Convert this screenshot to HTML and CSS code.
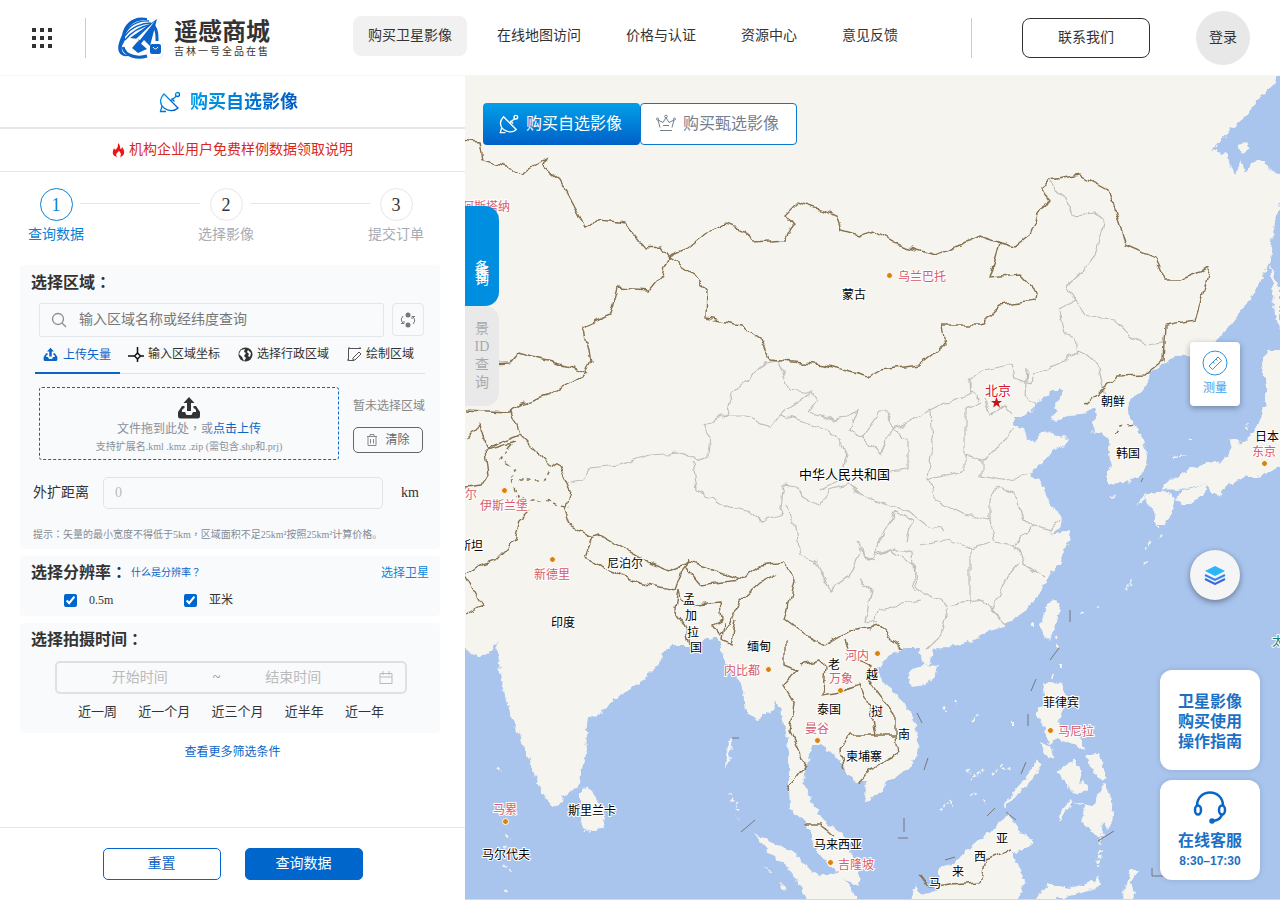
FILE: index.html
```html
<!DOCTYPE html>
<html lang="zh-CN">
<head>
<meta charset="utf-8">
<title>遥感商城</title>
<link rel="stylesheet" href="styles.css">
</head>
<body>
<svg class="defs" width="0" height="0" aria-hidden="true">
  <defs>
    <linearGradient id="brand" x1="0" y1="0" x2="1" y2="1"><stop offset="0" stop-color="#00a0e9"/><stop offset="1" stop-color="#0055c4"/></linearGradient>
    <symbol id="dish" viewBox="0 0 22 22"><path d="M5 3C0 8 1 14 5 17S15 21 19 17Z"/><path d="M3 15 1.500 20.500H7M11.500 10l6-5M12.500 7.500l3 3"/><circle cx="18.500" cy="3.500" r="2"/></symbol>
    <symbol id="upload" viewBox="0 0 24 24"><path d="M12 1 6.500 7H10v8h4V7h3.500Z"/><path d="M7.500 10H5L1 16v4q0 2.500 2.500 2.500h17Q23 22.500 23 20v-4l-4-6h-2.500v2q3 1 2.500 4h-3l-1.500 3h-5L8 16H5q-.5-3 2.500-4Z"/></symbol>
  </defs>
</svg>

<header class="header">
  <button class="apps" aria-label="应用"><svg width="20" height="20" fill="#333"><path d="M0 0h4v4H0zM8 0h4v4H8zM16 0h4v4h-4zM0 8h4v4H0zM8 8h4v4H8zM16 8h4v4h-4zM0 16h4v4H0zM8 16h4v4H8zM16 16h4v4h-4z"/></svg></button>
  <span class="rule"></span>
  <a class="logo" href="#">
    <svg width="46" height="46" viewBox="0 0 46 46">
      <circle cx="38" cy="35" r="10" fill="#f5f5f5"/><circle cx="37" cy="34" r="9" fill="#fff"/>
      <path fill="#0b62c9" d="M29 3C15 0 6 9 4 20 1 27-1 32 1 37c3 6 10 4 13 3C5 41 3 36 4 31l3-6C7 13 16 4 29 5Z"/>
      <g fill="none" stroke="#0b62c9"><path stroke-width="3" d="M5 32c2 9 14 12 24 9M34 9q5 4 5 14v3"/><path stroke-width="1.300" d="M8 17C13 9 22 5 31 6M7 21C13 12 24 8 33 8M7 25C14 16 25 11 35 9"/></g>
      <path fill="#0b62c9" d="M39 4 32 31l-6-6-4 5-2-6-8-1Zm-19 22 9 8-9 4-6-5Z"/><path d="M37 6 18 24l4 1Z" fill="#fff"/>
      <rect x="32" y="29" width="11" height="10" rx="2" fill="#0b62c9"/><path d="M35 32q2.500 4 5 0" fill="none" stroke="#fff"/>
    </svg>
    <span class="logo-text"><strong>遥感商城</strong><small>吉林一号全品在售</small></span>
  </a>
  <nav class="nav"><a class="on" href="#">购买卫星影像</a><a href="#">在线地图访问</a><a href="#">价格与认证</a><a href="#">资源中心</a><a href="#">意见反馈</a></nav>
  <span class="rule end"></span>
  <button class="contact">联系我们</button>
  <button class="login">登录</button>
</header>

<main class="main">
<section class="panel">
  <h1 class="title"><svg width="22" height="22" fill="none" stroke="url(#brand)" stroke-width="1.300"><use href="#dish"/></svg><span>购买自选影像</span></h1>
  <a class="notice" href="#"><svg width="13" height="15" viewBox="0 0 13 15"><path fill="#f01515" d="M6 0c3 3 2 5 2 6q2 0 2-2c4 5 2 9-2 10 2-3 0-5-1-6-2 2-4 3-2 6C0 13 0 9 2 5l1 2C6 5 6 3 6 0Z"/></svg>机构企业用户免费样例数据领取说明</a>
  <ol class="steps">
    <li class="step now"><b>1</b><span>查询数据</span></li><li class="line"></li>
    <li class="step"><b>2</b><span>选择影像</span></li><li class="line"></li>
    <li class="step"><b>3</b><span>提交订单</span></li>
  </ol>

  <section class="card area">
    <h2>选择区域<span lang="zh-Hant">：</span></h2>
    <div class="search">
      <label class="search-box"><svg width="16" height="16" fill="none" stroke="#8c8c8c" stroke-width="1.300"><circle cx="7" cy="7" r="5.500"/><path d="m11 11 4 4"/></svg><input type="text" aria-label="搜索区域" placeholder="输入区域名称或经纬度查询"></label>
      <button class="swap" aria-label="切换"><svg width="18" height="18" viewBox="0 0 18 18"><g fill="#777"><circle cx="9" cy="4" r="2.500"/><circle cx="9" cy="14" r="2.500"/></g><path d="M4 5Q1 8 3 11l2 2M2 12.500h3V10M14 13q3-3 1-6l-2-2M16 5.500h-3V8" fill="none" stroke="#777"/></svg></button>
    </div>
    <div class="tabs">
      <button class="tab on"><svg width="15" height="15" fill="currentColor"><use href="#upload"/></svg>上传矢量</button>
      <button class="tab"><svg width="16" height="16" fill="none" stroke="#111" stroke-width="1.500"><path d="M0 10h6M13 10h3M9.500 1v6M9.500 13v3"/><path d="m9.500 7 3 3-3 3-3-3Z"/></svg>输入区域坐标</button>
      <button class="tab"><svg width="15" height="15"><circle cx="7.500" cy="7.500" r="7" fill="#333"/><path fill="#fff" d="M1 7 3 3l4-1-1 3 2 1-2 3 2 2-2 3-2-4Zm9-4 3 3-1 4-2-1 1-2-2-2Z"/></svg>选择行政区域</button>
      <button class="tab"><svg width="15" height="15" fill="none" stroke="#555"><path d="M7 13.500H1.500v-12H14M1 1h2M12 1h2M1 12v2"/><path d="m12 5 2 2-6 6H6v-2Z"/></svg>绘制区域</button>
    </div>
    <div class="upload-row">
      <button class="drop"><svg width="24" height="24" fill="#333"><use href="#upload"/></svg><span>文件拖到此处<i lang="zh-Hant">，</i>或<em>点击上传</em></span><small>支持扩展名.kml .kmz .zip (需包含.shp和.prj)</small></button>
      <div class="picked"><span>暂未选择区域</span><button class="clear"><svg width="12" height="12" fill="none" stroke="#888"><path d="M1 2.500h10M4 2V.5h4V2M2 3v8.500h8V3M4.500 5v4.500M7.500 5v4.500"/></svg>清除</button></div>
    </div>
    <div class="distance"><label for="dist">外扩距离</label><input id="dist" type="text" placeholder="0"><span>km</span></div>
    <p class="hint">提示<i lang="zh-Hant">：</i>矢量的最小宽度不得低于5km<i lang="zh-Hant">，</i>区域面积不足25km²按照25km²计算价格。</p>
  </section>

  <section class="card res">
    <div class="res-head"><h2>选择分辨率<span lang="zh-Hant">：</span></h2><a href="#">什么是分辨率<i lang="zh-Hant">？</i></a><a class="sat" href="#">选择卫星</a></div>
    <div class="checks"><label><input type="checkbox" checked>0.5m</label><label><input type="checkbox" checked>亚米</label></div>
  </section>

  <section class="card time">
    <h2>选择拍摄时间<span lang="zh-Hant">：</span></h2>
    <div class="range"><input type="text" aria-label="开始时间" placeholder="开始时间"><span>~</span><input type="text" aria-label="结束时间" placeholder="结束时间"><svg width="14" height="14" fill="none" stroke="#bbb"><path d="M1 2.500h12v10H1zM1 6h12M4 0v4M10 0v4"/></svg></div>
    <div class="quick"><button>近一周</button><button>近一个月</button><button>近三个月</button><button>近半年</button><button>近一年</button></div>
  </section>
  <a class="more" href="#">查看更多筛选条件</a>
  <div class="actions"><button class="reset">重置</button><button class="query">查询数据</button></div>
</section>

<section class="map">
<svg class="canvas" viewBox="465 76 815 823" preserveAspectRatio="xMinYMin slice">
  <defs>
    <filter id="rough" filterUnits="userSpaceOnUse" x="455" y="65" width="835" height="845"><feTurbulence type="fractalNoise" baseFrequency=".16" numOctaves="2" seed="4"/><feDisplacementMap in="SourceGraphic" scale="7" xChannelSelector="R" yChannelSelector="G"/></filter>
    <filter id="wavy" filterUnits="userSpaceOnUse" x="455" y="65" width="835" height="845"><feTurbulence type="fractalNoise" baseFrequency=".11" numOctaves="1" seed="7"/><feDisplacementMap in="SourceGraphic" scale="9" xChannelSelector="R" yChannelSelector="G"/></filter>
  </defs>
  <rect x="455" y="65" width="1000" height="1000" fill="#a9c5ee"/>
  <g class="land" filter="url(#rough)">
    <path d="M450 60H1280L1275 83 1258 100 1245 117 1230 130 1212 150 1227 154 1231 168 1236 174 1241 160 1246 174 1250 163 1263 160 1270 170 1290 176V198L1280 205 1276 217 1272 240 1270 260 1258 285 1250 300 1232 323 1217 341 1205 355 1175 356 1165 364 1150 373 1148 382 1140 393 1128 401 1127 415 1136 426 1143 440 1147 457 1145 471 1138 478 1127 482 1118 484 1107 485 1107 476 1111 465 1108 450 1109 440 1103 434 1094 432 1092 424 1097 416 1095 408 1082 414 1068 415 1058 421 1051 420 1057 412 1055 405 1063 395 1061 390 1052 390 1045 397 1036 402 1032 412 1022 416 1013 417 1013 426 1024 428 1027 438 1035 442 1042 432 1049 431 1057 436 1069 438 1066 445 1055 450 1045 460 1034 470 1031 475 1040 481 1046 492 1049 502 1058 512 1062 520 1060 528 1050 534 1071 530 1070 538 1063 550 1061 562 1049 575 1044 585 1037 597 1025 611 1008 623 995 629 980 636 967 643 950 647 933 650 931 662 925 665 920 655 921 648 904 648 893 655 885 660 878 670 882 680 893 692 905 704 914 720 918 740 917 755 908 770 888 780 882 791 865 803 866 782 857 782 847 775 842 763 833 753 826 749 822 745 812 745 809 761 803 779 807 792 815 807 822 819 843 835 850 848 853 860 861 878 857 886 843 877 827 863 814 845 807 823 790 810 789 786 789 753 785 727 777 700 773 710 757 719 745 712 743 690 737 677 724 660 719 640 708 637 700 644 688 646 672 646 663 653 660 663 640 683 613 700 608 709 588 719 586 731 587 750 581 772 580 785 573 790 563 797 562 803 554 807 542 793 527 753 508 710 500 673 497 642 492 651 482 657 470 654 450 632Z"/>
    <path d="M1237 144 1246 142 1249 148 1242 153ZM580 788 588 787 600 803 605 818 602 828 590 832 582 828 580 805ZM1048 604 1055 600 1061 605 1055 625 1050 642 1045 638 1040 625ZM910 671 923 664 937 666 934 678 925 685 912 687 907 678ZM1045 683 1063 684 1066 695 1063 708 1058 725 1066 730 1080 736 1085 750 1068 742 1058 738 1050 745 1044 728 1036 713 1038 708 1046 705 1043 690ZM1040 742 1052 748 1054 757 1047 758ZM1037 759 1042 763 1036 775 1022 790 1006 807 1003 806 1015 790 1030 773ZM1063 767 1075 760 1082 772 1076 795 1066 785 1058 773ZM1085 755 1099 754 1103 770 1107 780 1098 778 1092 768ZM1072 788 1084 780 1090 790 1077 794ZM1105 782 1112 800 1113 818 1108 830 1103 822 1101 838 1092 833 1082 820 1084 806 1073 802 1060 820 1058 815 1070 801 1092 806Z"/>
    <path d="M755 833 775 845 795 853 815 875 840 873 850 885 860 905H810L800 885 785 865 765 848ZM1008 813 1018 830 1034 842 1020 850 1012 852 1025 880 1015 905H910L915 885 922 895 938 890 940 867 955 862 965 852 980 838 993 830ZM1036 900 1048 884 1070 888 1095 881 1098 875 1100 884 1096 889 1070 896 1043 902ZM1130 870 1139 870 1130 882 1136 892 1130 905 1122 898Z"/>
    <path d="M1290 350 1268 350 1261 365 1266 385 1266 401 1262 413 1255 430 1240 445 1236 438 1228 440 1232 445 1228 455 1218 462 1206 463 1195 466 1182 473 1166 483 1162 489 1177 490 1196 486 1208 484 1212 494 1219 496 1229 484 1243 478 1262 475 1275 470 1290 460ZM1176 500 1183 490 1207 484 1204 494 1191 504 1182 504ZM1146 495 1162 490 1175 496 1171 515 1165 526 1156 526 1153 510 1145 502ZM1137 506 1146 492 1145 499ZM1108 497 1117 494 1111 499ZM1270 265 1280 290V330L1275 315ZM1127 590 1132 580 1128 592ZM1143 563 1149 560 1144 566ZM728 740 732 738 729 762 726 770ZM735 813 739 822 736 816ZM761 865 772 872 770 873ZM778 882 787 890 783 892Z"/>
    <path class="islets" d="M1157 527v5M1162 534l-4 4M1150 542l-3 7M1143 565l4-4M1131 580l-5 10M1032 623v4M1081 613l5-1M1096 608l4-1M1056 636l1 4M1058 645v2M1060 665v3M1053 675l1 4M943 707l5 6M955 700l2 5M973 720l7-6M1012 724h2M1103 833l-4 12M1100 850l-2 18M966 770l5 2M970 780l6-8M978 775l5-5M1000 765l4 5 7-3M950 800l4 9M970 796l6-3M984 800l2 5M992 775l6-5M940 810l8-8M730 793l3 8M735 803l3 8M497 768l6 4M506 835l4 5M504 845l6 5M505 865l6 7M505 890l4 3M1174 457l14-3M1246 430l2-6M1188 440l2-2"/>
  </g>
  <g class="province" filter="url(#wavy)">
    <path d="M570 482 582 480 588 468 620 465 650 455 680 453 698 460 708 455 710 438 702 425 722 415 747 415 770 427 780 414 812 424 835 435 847 455 840 480 820 490"/>
    <path d="M693 462 697 490 722 505 752 512 762 520 780 515 784 485 798 487 805 500 820 505 830 490 848 485 860 495 880 502 905 510 925 525 945 530M785 507 796 525 800 555 M800 555 815 560 830 590 850 575 860 550 870 560 890 550 914 565 918 590 940 600 945 605 985 600 1000 620"/>
    <path d="M725 418 732 393 765 363 778 361 790 390 812 393 818 402 807 413 835 420 858 410 850 430 863 436 880 412 887 412 895 432 908 440 908 470 890 472M812 393 780 414"/>
    <path d="M862 436 880 455 890 432 912 420 930 410 946 402 970 395 969 380 982 370 1006 366 1012 363 1015 378 1030 383 1032 375 1060 363 1080 350 1098 365 1105 395"/>
    <path d="M1050 180 1055 190 1067 198 1072 215 1095 213 1104 220 1095 255 1080 275 1067 285 1075 300 1085 315 1115 320 1130 335 1145 345 1165 343M1060 310 1065 335 1076 338 1078 355M1075 300 1058 309M930 410 932 445 928 480 965 470 965 410 982 402M965 455 982 460 1005 440 1014 428M982 460 982 475 1005 480 1030 475M930 480 935 500 965 515 990 520 990 500 998 485M998 485 1015 495 1023 520 1050 530 1060 520M990 520 995 542 1015 545 1034 525M990 542 970 548 970 605M920 545 950 540 970 548M1015 545 1025 565 1045 577M1020 563 1005 580 992 610 1007 625M948 607 942 635 926 650M870 630 880 610 920 600M860 580 872 590 865 620 878 623"/>
    <path d="M907 540 912 520 895 512 880 540 875 555 895 548 912 553 915 590M858 540 865 555 875 560M985 400 990 415 1004 406 1012 416M970 377 970 390 980 400M1027 370 1025 395 1035 405"/>
  </g>
  <g class="border" filter="url(#wavy)">
    <path d="M460 140 480 142 483 160 510 168 520 175 545 160 543 165 560 180 585 226 600 220 625 223 645 248 661 247 668 257 662 275 650 290 617 288 610 315 583 327 591 360 585 375 550 395 520 405 510 412 465 410M465 365 510 363 518 353 535 358 575 368 588 375M668 256 690 247 705 235 725 224 745 230 752 242 785 240 793 225 785 215 798 202 837 215 842 230 860 235 875 231 900 245 935 255 960 245 980 236 1000 243 1015 247 1030 235 1038 215 1048 200 1040 188 1050 180 1080 175 1108 190 1120 225 1125 245 1155 258 1165 280 1180 280 1210 268 1195 320 1165 325 1163 360 1145 375 1117 376 1085 405"/>
    <path d="M668 256 695 275 707 290 706 318 740 325 760 338 770 360 825 365 868 377 880 370 920 365 945 345 942 325 980 325 1000 305 1035 300 1036 292 1020 275 990 278 1000 243"/>
    <path d="M510 410 517 425 520 435 495 445 485 450 488 475 482 485 465 487M520 435 545 460 560 468 570 490 565 510 570 525 590 537 600 535 640 558 670 570 690 562 715 570 740 580 760 565 785 562 795 580 785 620 805 635 825 645 850 630 880 625 890 640 903 648"/>
    <path d="M592 538 585 558 610 570 640 583 675 590 682 570 690 560M686 568 700 585 740 580M678 590 680 600 695 605 720 603 722 620 713 625 720 635 730 625 740 600 760 582 775 575M678 590 675 610 685 625 690 645M530 510 520 520 515 540 495 560 480 565 465 575 482 605 465 615M465 440 480 425 487 450 515 442M785 640 785 665 797 670 783 685 795 705 790 730 805 765 788 790M725 622 723 640 730 645 735 620M800 665 820 660 825 665 823 695 840 692 860 685 870 710 875 735 850 735 840 750 845 770M845 640 850 655 870 665 865 675 895 715 895 735 875 735M895 735 897 755 870 770 860 782M803 825 820 825 833 835M920 875 930 888 950 885 980 883 985 860 1010 850"/>
    <path class="dash" d="M510 445 500 460 515 470 510 480 545 480 550 470M512 480 520 500 540 500 570 507M1115 432 1120 426 1135 424"/>
  </g>
  <path class="sealine" d="M1070 610v12M1059 648l-9 12M1036 679l-5 12M1028 714v12M1026 762l-5 12M917 713l5 10M928 758l-4 12M904 818v14M995 808l-8 8M898 838h10M1006 812l10 8M955 857l-10 3M732 738h7M755 820l-14 12M1152 868v8h12M1114 831l-16 10M1143 478l-2 4"/>
  <g class="country">
    <text x="842" y="299">蒙古</text><text class="china" x="799" y="479">中华人民共和国</text><text x="1101" y="406">朝鲜</text><text x="1116" y="458">韩国</text><text x="1255" y="441">日本</text><text x="447" y="550">基斯坦</text><text x="607" y="568">尼泊尔</text><text x="551" y="627">印度</text><text x="683" y="604">孟</text><text x="685" y="620">加</text><text x="687" y="637">拉</text><text x="690" y="652">国</text><text x="747" y="651">缅甸</text><text x="828" y="669">老</text><text x="866" y="679">越</text><text x="871" y="716">挝</text><text x="898" y="739">南</text><text x="817" y="714">泰国</text><text x="846" y="761">柬埔寨</text><text x="1043" y="707">菲律宾</text><text x="568" y="815">斯里兰卡</text><text x="482" y="859">马尔代夫</text><text x="814" y="849">马来西亚</text><text x="996" y="843">亚</text><text x="974" y="861">西</text><text x="952" y="876">来</text><text x="929" y="888">马</text>
  </g>
  <g class="city">
    <text x="462" y="211">阿斯塔纳</text><text x="898" y="281">乌兰巴托</text><text class="capital" x="985" y="395">北京</text><text x="1252" y="456">东京</text><text x="465" y="499">尔</text><text x="480" y="510">伊斯兰堡</text><text x="534" y="579">新德里</text><text x="845" y="660">河内</text><text x="724" y="675">内比都</text><text x="829" y="683">万象</text><text x="805" y="733">曼谷</text><text x="1058" y="736">马尼拉</text><text x="493" y="814">马累</text><text x="838" y="869">吉隆坡</text>
  </g>
  <text x="1272" y="646" class="ocean">太</text>
  <g class="dot"><circle cx="889.500" cy="275.500" r="3"/><circle cx="504.500" cy="490.500" r="3"/><circle cx="552.500" cy="559.500" r="3"/><circle cx="1264.500" cy="463.500" r="3"/><circle cx="877.500" cy="653.500" r="3"/><circle cx="768.500" cy="669.500" r="3"/><circle cx="840.500" cy="690.500" r="3"/><circle cx="817.500" cy="740.500" r="3"/><circle cx="1050.500" cy="730.500" r="3"/><circle cx="505.500" cy="821.500" r="3"/><circle cx="830.500" cy="862.500" r="3"/></g>
  <path fill="#c81018" d="m996.500 397 1.400 4h4.100l-3.300 2.500 1.300 4-3.500-2.400-3.500 2.400 1.300-4-3.300-2.500h4.100Z"/>
</svg>
  <div class="modes">
    <button class="mode on"><svg width="20" height="20" fill="none" stroke="#fff" stroke-width="1.500"><use href="#dish"/></svg>购买自选影像</button>
    <button class="mode"><svg width="20" height="20" fill="none" stroke="#75808f"><path d="M4 13.500 2 6l5 2.500 3-5 3 5L18 6l-2 7.500M4 16.500h12M7 11.500h6"/><circle cx="10" cy="2.500" r="1.300"/><circle cx="1.500" cy="5" r="1"/><circle cx="18.500" cy="5" r="1"/></svg>购买甄选影像</button>
  </div>
  <div class="side"><button class="side-tab on"><span>条件查询</span></button><button class="side-tab"><span>景ID查询</span></button></div>
  <button class="measure"><svg width="26" height="26" fill="none" stroke="#2c93dc"><circle cx="13" cy="13" r="12"/><path d="m7 16 9-9 3.500 3.500-9 9ZM11 12l1.500 1.500M14 9l1.500 1.500"/></svg>测量</button>
  <button class="layers" aria-label="图层"><svg width="22" height="20" fill="none" stroke-width="2"><path d="m1 6 10-5 10 5-10 5Z" fill="#2cb5f8"/><path d="m1 10 10 5 10-5" stroke="#2c86e8"/><path d="m1 14 10 5 10-5" stroke="#3c66dd"/></svg></button>
  <div class="help">
    <a href="#">卫星影像<br>购买使用<br>操作指南</a>
    <a href="#"><svg width="34" height="34" fill="none" stroke="#0b65c8" stroke-width="2.500"><path d="M4 15C4-3 30-3 30 15M29 23q-1 6-9 7"/><ellipse cx="5" cy="19" rx="3" ry="4.500"/><ellipse cx="29" cy="19" rx="3" ry="4.500"/><circle cx="19" cy="30" r="1.500"/></svg>在线客服<small>8:30–17:30</small></a>
  </div>
</section>
</main>
</body>
</html>
```
FILE: styles.css
```css
* { box-sizing: border-box; }
body { margin: 0; height: 100vh; display: flex; flex-direction: column; overflow: hidden; background: #fff; color: #333; font: 14px/20px "Liberation Serif", "Noto Sans CJK SC", serif; }
button, input { font: inherit; color: inherit; background: none; border: 0; padding: 0; margin: 0; }
a { color: inherit; text-decoration: none; }
i { font-style: normal; }
h1, h2, p, ol { margin: 0; padding: 0; list-style: none; }
.defs { position: absolute; }

.header { display: flex; align-items: center; min-height: 76px; padding: 0 30px 0 32px; border-bottom: 1px solid #f5f5f5; }
.apps { display: flex; }
.rule { width: 1px; height: 40px; margin: 0 32px 0 33px; background: #ccc; }
.rule.end { margin: 0 50px 0 auto; }
.logo { display: flex; gap: 10px; align-items: center; }
.logo-text { display: flex; flex-direction: column; font-family: "Noto Sans CJK SC", sans-serif; }
.logo-text strong { font-size: 24px; line-height: 30px; margin-top: -4px; }
.logo-text small { font-size: 10px; line-height: 12px; letter-spacing: 2px; }
.nav { display: flex; gap: 15px; margin: -4px 0 0 83px; }
.nav a { padding: 10px 15px; border-radius: 8px; white-space: nowrap; }
.nav .on { background: #f1f1f1; }
.contact { width: 128px; height: 40px; border: 1px solid #333; border-radius: 8px; margin-right: 46px; }
.login { width: 54px; height: 54px; border-radius: 50%; background: #e8e8e8; }

.main { flex: 1; display: flex; min-height: 0; }
.panel { width: 465px; flex: none; display: flex; flex-direction: column; }
.title { display: flex; align-items: center; justify-content: center; gap: 9px; height: 53px; padding-right: 8px; border-bottom: 2px solid #e4e6ea; font-size: 18px; }
.title span { color: transparent; background: linear-gradient(120deg, #00a0e9, #0055c4); background-clip: text; }
.notice { display: flex; align-items: center; justify-content: center; gap: 4px; height: 43px; border-bottom: 1px solid #e6e6e6; color: #d9281e; }
.steps { display: flex; padding: 16px 41px 0 28px; height: 93px; color: #a6abb3; }
.step { width: 56px; display: flex; flex-direction: column; align-items: center; gap: 4px; }
.step b { width: 33px; height: 33px; border: 1px solid #e6e6e6; border-radius: 50%; text-align: center; font-size: 18px; line-height: 32px; font-weight: 400; color: #333; }
.step.now, .step.now b { color: #0b7fd6; border-color: #0b7fd6; }
.line { flex: 1; height: 1px; margin: 15px -2px 0 -4px; background: #e6e6e6; }

.card { margin: 0 25px 7px 20px; background: #f8fafc; border-radius: 4px; }
.card h2 { font-size: 16px; line-height: 20px; }
.area { padding: 8px 15px 4px; height: 284px; }
.area h2 { margin-left: -4px; }
.search { display: flex; gap: 8px; padding: 10px 1px 0 4px; }
.search-box { flex: 1; display: flex; align-items: center; gap: 12px; height: 34px; padding: 0 0 0 11px; border: 1px solid #e3e6ea; border-radius: 2px; }
.search-box input { flex: 1; min-width: 0; outline: 0; }
.search-box input::placeholder { color: #777; }
.swap { width: 32px; height: 33px; border: 1px solid #e3e6ea; border-radius: 4px; display: grid; place-items: center; }
.tabs { display: flex; gap: 18px; border-bottom: 1px solid #dfe3e8; height: 37px; font-size: 12px; }
.tab { display: flex; gap: 4px; align-items: center; white-space: nowrap; padding-bottom: 2px; }
.tab.on { gap: 5px; color: #0b65c8; border-bottom: 2px solid #0b65c8; padding: 0 9px 0 8px; margin: 0 -10px -1px 0; }
.upload-row { display: flex; gap: 14px; padding: 13px 0 0 4px; font-size: 12px; }
.drop { width: 300px; height: 73px; border: 1px dashed #0b65c8; border-radius: 3px; color: #8a9099; display: flex; flex-direction: column; align-items: center; padding-top: 8px; line-height: 18px; }
.drop em { color: #0b65c8; font-style: normal; }
.drop small { font-size: 10px; line-height: 18px; }
.picked { padding-top: 9px; display: flex; flex-direction: column; gap: 11px; color: #888; white-space: nowrap; }
.clear { width: 70px; height: 26px; border: 1px solid #666; border-radius: 5px; color: #666; display: flex; align-items: center; justify-content: center; gap: 7px; }
.distance { display: flex; align-items: center; padding: 17px 0 0; margin-left: -2px; }
.distance input { width: 280px; height: 32px; margin: 0 18px 0 14px; padding: 0 11px; border: 1px solid #e0e3e8; border-radius: 5px; }
.distance input::placeholder, .range input::placeholder { color: #bbb; opacity: 1; }
.hint { margin: 16px 0 0 -2px; font-size: 10px; color: #858b94; white-space: nowrap; }
.res { height: 60px; padding: 7px 11px; }
.res-head { display: flex; align-items: center; gap: 4px; color: #0b65c8; font-size: 10px; }
.res-head h2 { color: #333; }
.res-head .sat { margin-left: auto; font-size: 12px; color: #0b87dc; }
.checks { display: flex; padding: 8px 0 0 33px; font-size: 12px; line-height: 18px; }
.checks label { width: 120px; display: flex; align-items: center; gap: 12px; }
.checks input { width: 13px; height: 13px; accent-color: #0066cc; }
.time { height: 110px; padding: 7px 11px; }
.range { display: flex; align-items: center; margin: 11px 22px 0 24px; height: 33px; border: 2px solid #dfe0e2; border-radius: 5px; padding: 0 12px 0 6px; }
.range input { flex: 1; min-width: 0; text-align: center; }
.range span { width: 0; color: #888; display: flex; justify-content: center; }
.range svg { margin-left: 9px; }
.quick { display: flex; justify-content: space-between; padding: 8px 45px 0 47px; font-size: 13px; }
.more { text-align: center; font-size: 12px; color: #0b65c8; padding-top: 2px; }
.actions { margin-top: auto; height: 73px; border-top: 1px solid #e6e6e6; padding-top: 20px; display: flex; justify-content: center; gap: 24px; }
.actions button { width: 118px; height: 32px; border: 1px solid #0066cc; border-radius: 5px; color: #0b65c8; }
.actions .query { background: #0066cc; color: #fff; }

.map { flex: 1; position: relative; min-width: 0; overflow: hidden; background: #a9c5ee; border-bottom: 1px solid #d5d8dc; }
.canvas { display: block; width: 100%; height: 100%; }
.land { fill: #f5f4ee; }
.islets { fill: none; stroke: #f5f4ee; stroke-width: 2; stroke-dasharray: 3 2; }
.province { fill: none; stroke: #bfbebb; stroke-width: 1.2; }
.border { fill: none; stroke: #85714f; stroke-width: 1.4; }
.dash { stroke-dasharray: 4 4; }
.sealine { fill: none; stroke: #777; }
.country, .city, .ocean { font-family: "Noto Sans CJK SC", sans-serif; font-size: 12px; fill: #000; stroke: #fff; stroke-width: 2px; paint-order: stroke; }
.country .china { font-size: 13px; }
.city { fill: #d95a6a; }
.city .capital { font-size: 13px; fill: #d9152b; }
.ocean { fill: #168080; }
.dot { fill: #d9820c; stroke: #fff; stroke-width: 1; }
.modes { position: absolute; left: 18px; top: 27px; display: flex; }
.mode { width: 157px; height: 42px; border: 1px solid #0b78cf; border-radius: 4px; background: #fff; color: #75808f; font-size: 16px; display: flex; align-items: center; gap: 7px; padding: 0 0 0 15px; }
.mode.on { color: #fff; background: linear-gradient(#00a0e9, #0060c8); border: 0; padding-left: 16px; }
.side { position: absolute; left: 0; top: 130px; }
.side-tab { display: flex; width: 34px; height: 100px; justify-content: center; align-items: center; background: #e9e9e9; color: #aaa; border-radius: 0 14px 14px 0; line-height: 18px; }
.side-tab span { width: 16px; word-break: break-all; }
.side-tab.on { color: #fff; background: #008fe0; padding-top: 36px; line-height: 4px; }
.side-tab.on span { width: 14px; }
.measure { position: absolute; right: 40px; top: 266px; width: 50px; height: 64px; border-radius: 4px; background: #fff; box-shadow: 0 2px 6px #0005; color: #3ba6ec; font-size: 12px; display: flex; flex-direction: column; align-items: center; justify-content: center; gap: 2px; }
.layers { position: absolute; right: 40px; top: 474px; width: 50px; height: 50px; border-radius: 50%; background: #f5f5f5; box-shadow: 0 2px 6px #0006; display: grid; place-items: center; }
.help { position: absolute; right: 20px; bottom: 19px; display: flex; flex-direction: column; gap: 10px; }
.help a { width: 100px; height: 100px; border-radius: 12px; background: #fff; box-shadow: 0 0 6px #0002; color: #1c70c5; font: 700 16px/20px "Noto Sans CJK SC", sans-serif; display: flex; flex-direction: column; align-items: center; justify-content: center; text-align: center; }
.help a + a { gap: 4px; }
.help small { font: 700 12px/16px "Liberation Sans", sans-serif; }
```
